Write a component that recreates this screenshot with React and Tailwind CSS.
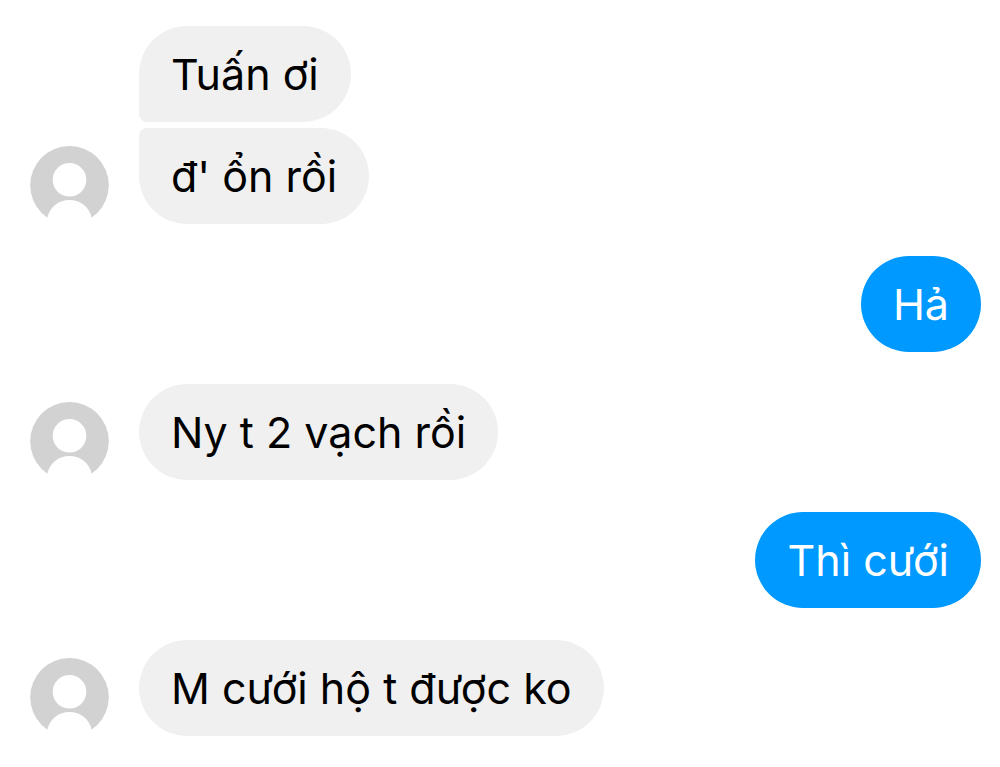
import React from 'react';
import { clsx } from 'clsx';

const groups = [
  { id: 1, from: 'friend', texts: ['Tuấn ơi', "đ' ổn rồi"] },
  { id: 2, from: 'me', texts: ['Hả'] },
  { id: 3, from: 'friend', texts: ['Ny t 2 vạch rồi'] },
  { id: 4, from: 'me', texts: ['Thì cưới'] },
  { id: 5, from: 'friend', texts: ['M cưới hộ t được ko'] },
];

function Avatar() {
  return (
    <svg className="w-[79px] h-[79px] shrink-0" viewBox="0 0 79 79" aria-hidden="true">
      <circle cx="39.5" cy="40.2" r="39.3" fill="#d2d2d2" />
      <circle cx="39.5" cy="34.8" r="16.8" fill="#fff" />
      <path d="M17 74 C19 62 29 55 39.5 55 S60 62 62 74 V79 H17 Z" fill="#fff" />
    </svg>
  );
}

function Bubble({ text, mine, first, last }) {
  return (
    <p
      className={clsx(
        'px-8 py-4 rounded-[48px] text-[43px] leading-[64px] break-words',
        mine ? 'bg-[#0099ff] text-white' : 'bg-[#f0f0f0] text-black',
        !mine && !last && 'rounded-bl-lg',
        !mine && !first && 'rounded-tl-lg'
      )}
    >
      {text}
    </p>
  );
}

function MessageGroup({ from, texts }) {
  const mine = from === 'me';

  return (
    <li className={clsx('flex items-end gap-[30px]', mine && 'justify-end')}>
      {!mine && <Avatar />}
      <div className={clsx('flex flex-col gap-1.5', mine ? 'items-end' : 'items-start')}>
        {texts.map((text, i) => (
          <Bubble
            key={text}
            text={text}
            mine={mine}
            first={i === 0}
            last={i === texts.length - 1}
          />
        ))}
      </div>
    </li>
  );
}

function App() {
  return (
    <main className="min-h-screen bg-white pt-[26px] pl-[30px] pr-[19px] font-['Inter','Liberation_Sans',sans-serif]">
      <ul className="flex flex-col gap-8">
        {groups.map((group) => (
          <MessageGroup key={group.id} from={group.from} texts={group.texts} />
        ))}
      </ul>
    </main>
  );
}

export default App;
